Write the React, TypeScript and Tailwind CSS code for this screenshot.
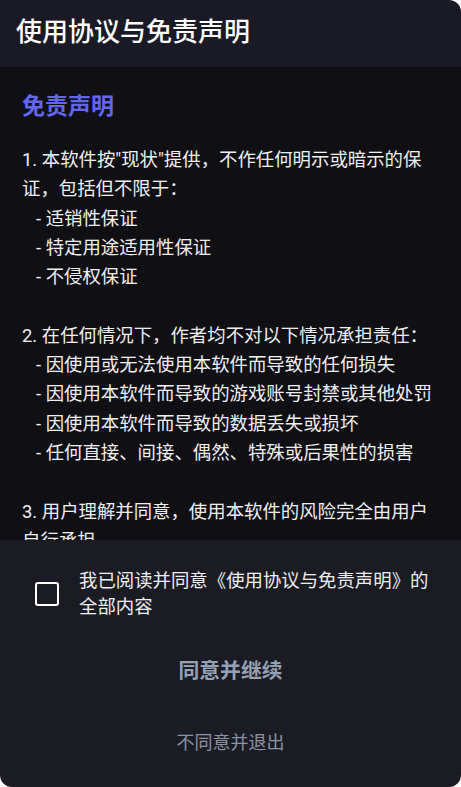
import React from "react";

const font = { fontFamily: 'Roboto, "Noto Sans CJK SC", "Noto Sans", sans-serif' };

export default function App() {
  const items1 = ["适销性保证", "特定用途适用性保证", "不侵权保证"];
  const items2 = [
    "因使用或无法使用本软件而导致的任何损失",
    "因使用本软件而导致的游戏账号封禁或其他处罚",
    "因使用本软件而导致的数据丢失或损坏",
    "任何直接、间接、偶然、特殊或后果性的损害",
  ];
  return (
    <div className="w-[461px] h-[787px] bg-white" style={font}>
      <div className="flex flex-col h-full rounded-tr-[12px] rounded-b-[12px] overflow-hidden">
        <div className="h-[67px] shrink-0 bg-[#1a1a26] flex items-center px-4 pb-[3px]">
          <h1 className="text-[26px] leading-[32px] font-medium text-white">使用协议与免责声明</h1>
        </div>
        <div className="flex-1 overflow-hidden bg-[#0f0f14] pl-[22px] pr-[22px] pt-[24px]">
          <h2 className="text-[23px] leading-[32px] font-bold text-[#6366f1]">免责声明</h2>
          <div className="mt-[22px] text-[18.4px] leading-[29.3px] text-[#f0f0f2]">
            <p>1. 本软件按"现状"提供，不作任何明示或暗示的保证，包括但不限于：</p>
            {items1.map((t) => (
              <p key={t} className="pl-[14px]">- {t}</p>
            ))}
            <p className="mt-[29.3px]">2. 在任何情况下，作者均不对以下情况承担责任：</p>
            {items2.map((t) => (
              <p key={t} className="pl-[14px] whitespace-nowrap">- {t}</p>
            ))}
            <p className="mt-[29.3px]">3. 用户理解并同意，使用本软件的风险完全由用户自行承担</p>
          </div>
        </div>
        <div className="h-[247px] shrink-0 bg-[#1b1b24] pt-[28px] flex flex-col">
          <label className="flex items-center pl-[35px] pr-[22px] gap-[20px]">
            <span className="w-[24px] h-[24px] shrink-0 rounded-[3px] border-[2.5px] border-white" />
            <span className="text-[18.4px] leading-[25.8px] text-[#eeeef0]">我已阅读并同意《使用协议与免责声明》的全部内容</span>
          </label>
          <button className="mt-[26px] h-[52px] w-full text-[20.8px] font-bold text-[#94a0b4]">同意并继续</button>
          <button className="mt-[23px] h-[44px] w-full text-[18px] text-[#8a93a3]">不同意并退出</button>
        </div>
      </div>
    </div>
  );
}
